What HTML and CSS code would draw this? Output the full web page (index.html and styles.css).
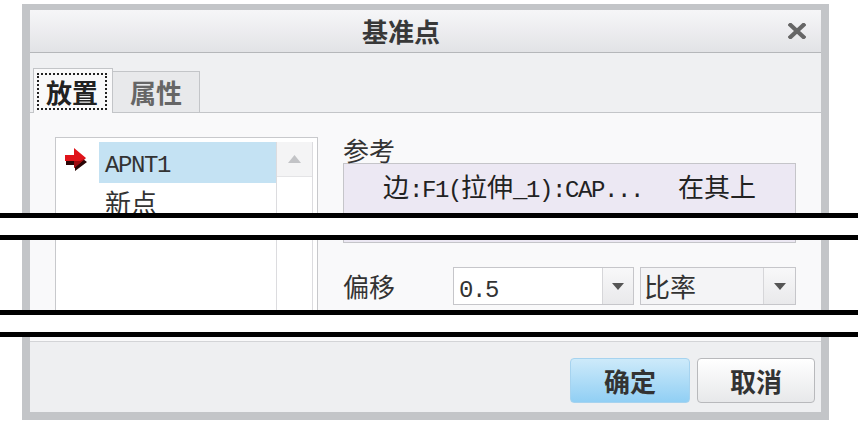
FILE: index.html
```html
<!DOCTYPE html>
<html lang="zh-CN">
<head>
<meta charset="utf-8">
<title>基准点</title>
<link rel="stylesheet" href="styles.css">
</head>
<body>
<section class="slice s1">
  <div class="dlg">
    <div class="titlebar">
      <div class="title">基准点</div>
      <svg class="close" width="18" height="16" viewBox="0 0 18 16"><path d="M2.5 2 L15.5 14 M15.5 2 L2.5 14" stroke="#666" stroke-width="4.2" stroke-linecap="square"/></svg>
    </div>
    <div class="tabs">
      <div class="tab active"><div class="focus">放置</div></div>
      <div class="tab">属性</div>
    </div>
    <div class="panel p1">
      <div class="list">
        <div class="items">
          <div class="row sel">
            <div class="ico">
              <svg width="23" height="26" viewBox="0 0 23 26"><polygon points="1,13 10,13 10,7 22,16 10,25 10,19 1,19" fill="#2a0606"/><polygon points="0,9 9,9 9,2 21,12 9,22 9,15 0,15" fill="#e0141a"/><polygon points="9,15 9,22 21,12 15,15" fill="#9a0a0e"/></svg>
            </div>
            <div class="lbl"><span class="m">APNT1</span></div>
          </div>
          <div class="row">
            <div class="ico"></div>
            <div class="lbl">新点</div>
          </div>
        </div>
        <div class="sbar">
          <div class="sbtn"><svg width="13" height="8" viewBox="0 0 13 8"><polygon points="6.5,0 13,8 0,8" fill="#c2c3c6"/></svg></div>
        </div>
      </div>
      <div class="col">
        <div class="lab">参考</div>
        <div class="ref">
          <span class="refname">边<span class="m">:F1(</span>拉伸<span class="m">_1):CAP...</span></span>
          <span>在其上</span>
        </div>
      </div>
    </div>
  </div>
</section>
<div class="brk"></div>
<section class="slice s2">
  <div class="dlg">
    <div class="panel p2">
      <div class="list cont">
        <div class="items"></div>
        <div class="sbar"></div>
      </div>
      <div class="col">
        <div class="ref-tail"></div>
        <div class="offrow">
          <div class="lab2">偏移</div>
          <div class="inp">
            <div class="val"><span class="m">0.5</span></div>
            <div class="arr"><svg width="12" height="7" viewBox="0 0 12 7"><polygon points="0,0 12,0 6,7" fill="#555"/></svg></div>
          </div>
          <div class="inp cmb">
            <div class="val">比率</div>
            <div class="arr"><svg width="12" height="7" viewBox="0 0 12 7"><polygon points="0,0 12,0 6,7" fill="#555"/></svg></div>
          </div>
        </div>
      </div>
    </div>
  </div>
</section>
<div class="brk"></div>
<section class="slice s3">
  <div class="dlg">
    <div class="tail"></div>
    <div class="footer">
      <div class="btn ok">确定</div>
      <div class="btn cancel">取消</div>
    </div>
  </div>
</section>
</body>
</html>
```
FILE: styles.css
```css
* { box-sizing: border-box; margin: 0; padding: 0; }
html, body { background: #fff; }
body {
  margin: 0;
  width: 858px;
  height: 428px;
  overflow: hidden;
  font-family: "Noto Sans CJK SC", "Noto Sans", sans-serif;
  font-size: 26px;
  color: #333;
}
.m {
  font-family: "Liberation Mono", "DejaVu Sans Mono", monospace;
  font-size: 24px;
  letter-spacing: -1.4px;
}
.slice {
  overflow: hidden;
  padding-left: 22px;
  padding-right: 29px;
}
.s1 { height: 213px; padding-top: 4px; }
.s2 { height: 70px; }
.s3 { height: 91px; }
.brk {
  height: 27px;
  border-top: 5px solid #000;
  border-bottom: 5px solid #000;
  background: #fff;
}
.dlg {
  border-left: 8px solid #c3c5c8;
  border-right: 8px solid #c3c5c8;
}
.s1 .dlg { border-top: 6px solid #c3c5c8; }
.s3 .dlg { border-bottom: 8px solid #c3c5c8; }

.titlebar {
  height: 43px;
  border-bottom: 1px solid #b5b7ba;
  background: linear-gradient(#f6f6f8, #e2e3e6);
  display: flex;
  align-items: center;
}
.title {
  flex: 1;
  text-align: center;
  padding-right: 16px;
  font-weight: 700;
  color: #383838;
  line-height: 42px;
}
.close { margin-right: 15px; display: block; }

.tabs {
  height: 60px;
  background: #eff0f2;
  border-bottom: 1px solid #c3c5c8;
  display: flex;
  align-items: flex-end;
  padding-left: 3px;
}
.tab {
  width: 87px;
  height: 41px;
  border: 1px solid #c3c5c8;
  border-left: none;
  border-bottom: none;
  background: #e8e9eb;
  text-align: center;
  line-height: 40px;
  color: #666;
  font-weight: 700;
}
.tab.active {
  width: 80px;
  height: 45px;
  margin-bottom: -1px;
  border-left: 1px solid #c3c5c8;
  background: #f9f9fa;
  padding: 4px 3px 0 3px;
  color: #222;
  line-height: normal;
}
.focus {
  width: 70px;
  height: 37px;
  border: 2px dotted #222;
  line-height: 33px;
  text-align: center;
}

.panel {
  background: #f9f9fa;
  display: grid;
  grid-template-columns: 263px 453px;
  column-gap: 25px;
  padding-left: 25px;
}
.p1 { padding-top: 24px; height: 100px; }
.p2 { height: 70px; }

.list {
  border: 1px solid #c8c9cc;
  background: #fff;
  display: flex;
  padding: 4px 4px 0 0;
  height: 200px;
}
.list.cont {
  border-top: none;
  border-bottom: none;
  padding-top: 0;
  height: 70px;
}
.items { flex: 1; }
.row {
  display: flex;
  height: 41px;
}
.ico {
  width: 43px;
  padding-left: 9px;
  padding-top: 4px;
}
.ico svg { display: block; }
.lbl {
  flex: 1;
  padding-left: 6px;
  line-height: 38px;
  color: #333;
}
.row.sel .lbl { background: #c4e2f3; }
.sbar {
  width: 37px;
  border-left: 1px solid #dcdcdf;
  border-right: 1px solid #dcdcdf;
}
.sbtn {
  height: 35px;
  background: #f4f4f5;
  border-bottom: 1px solid #e4e4e6;
  display: flex;
  align-items: center;
  justify-content: center;
}

.lab {
  height: 26px;
  line-height: 26px;
  color: #333;
}
.ref {
  height: 80px;
  border: 1px solid #c5c5c9;
  background: #ece8f3;
  display: flex;
  padding-left: 39px;
  line-height: 44px;
  color: #222;
}
.refname { width: 295px; white-space: nowrap; }
.ref-tail {
  height: 3px;
  border: 1px solid #c5c5c9;
  border-top: none;
  background: #ece8f3;
}
.offrow {
  margin-top: 24px;
  display: flex;
  align-items: center;
  height: 38px;
}
.lab2 { width: 110px; color: #333; line-height: 38px; }
.inp {
  width: 181px;
  height: 38px;
  border: 1px solid #c6c6ca;
  background: #fff;
  display: flex;
}
.val {
  flex: 1;
  padding-left: 5px;
  line-height: 36px;
  color: #333;
}
.arr {
  width: 31px;
  border-left: 1px solid #d6d6d9;
  background: linear-gradient(#f8f8f9, #e9e9eb);
  display: flex;
  align-items: center;
  justify-content: center;
}
.cmb {
  width: 156px;
  margin-left: 6px;
  background: #f4f4f6;
}
.cmb .val { padding-left: 3px; }
.cmb .arr { width: 32px; }

.tail {
  height: 5px;
  background: #f9f9fa;
  border-bottom: 1px solid #d3d4d7;
}
.footer {
  height: 70px;
  background: #eeeff1;
  display: flex;
  justify-content: flex-end;
  align-items: flex-start;
  gap: 7px;
  padding: 16px 6px 0 0;
}
.btn {
  height: 45px;
  border-radius: 4px;
  font-weight: 700;
  line-height: 43px;
  text-align: center;
  color: #333;
}
.ok {
  width: 120px;
  background: linear-gradient(#cdeafa, #91cff4);
  border: 1px solid #a6d3ef;
}
.cancel {
  width: 118px;
  background: linear-gradient(#ffffff, #e7e8ea);
  border: 1px solid #b8b9bc;
}
```
